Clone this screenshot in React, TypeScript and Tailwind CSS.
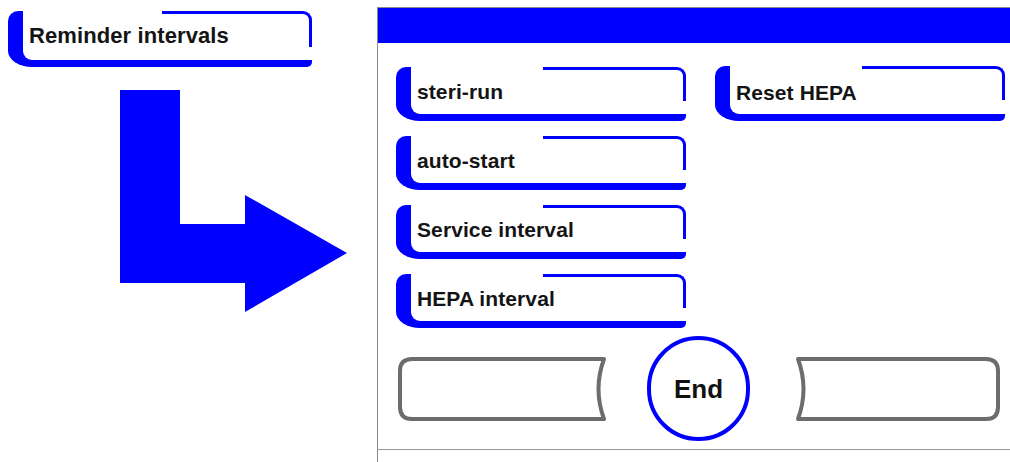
import React from 'react';

const BLUE = 'border-[#0000ff]';

type MenuButtonProps = {
  label: string;
  width: string;
  height: string;
  cornerW: string;
  cornerH: string;
  textSize?: string;
  nudge?: string;
};

// blue "tab" button: thick left bar, bottom bar, thin top-right hook
const MenuButton = ({ label, width, height, cornerW, cornerH, textSize = 'text-[21px]', nudge = '' }: MenuButtonProps) => (
  <div
    className={`relative flex items-center ${width} ${height} rounded-tl-[10px] rounded-bl-[24px_16px] rounded-br-[5px] border-l-[15px] border-b-[7px] ${BLUE} pl-[6px]`}
  >
    <span className={`${textSize} ${nudge} font-bold leading-none text-[#141414] tracking-[0.1px]`}>{label}</span>
    <span
      className={`absolute right-0 top-0 ${cornerW} ${cornerH} rounded-tr-[9px] border-t-[3px] border-r-[3px] ${BLUE}`}
    />
  </div>
);

const SoftKeyLeft = () => (
  <svg width="209" height="64" viewBox="0 0 209 64" className="shrink-0">
    <path
      d="M14 2 H206 Q195 32 206 62 H14 Q2 62 2 50 V14 Q2 2 14 2 Z"
      fill="white"
      stroke="#6c6c6c"
      strokeWidth="4"
      strokeLinejoin="round"
    />
  </svg>
);

const SoftKeyRight = () => (
  <svg width="205" height="64" viewBox="0 0 205 64" className="shrink-0">
    <path
      d="M3 2 Q14 32 3 62 H191 Q203 62 203 50 V14 Q203 2 191 2 Z"
      fill="white"
      stroke="#6c6c6c"
      strokeWidth="4"
      strokeLinejoin="round"
    />
  </svg>
);

const App = () => {
  const left = ['steri-run', 'auto-start', 'Service interval', 'HEPA interval'];

  return (
    <div className="flex w-[1010px] h-[462px] overflow-hidden bg-white font-['Liberation_Sans',Arial,sans-serif]">
      {/* left side: menu entry + arrow */}
      <div className="flex w-[377px] shrink-0 flex-col">
        <div className="ml-[8px] mt-[11px]">
          <MenuButton
            label="Reminder intervals"
            width="w-[304px]"
            height="h-[56px]"
            cornerW="w-[150px]"
            cornerH="h-[36px]"
            textSize="text-[22px]"
          />
        </div>
        <svg width="227" height="222" viewBox="0 0 227 222" className="ml-[120px] mt-[23px]">
          <path d="M0 0 H60 V134 H125 V105 L227 163 L125 222 V193 H0 Z" fill="#0000ff" />
        </svg>
      </div>

      {/* right side: display panel */}
      <div className="mt-[7px] flex flex-1 flex-col border-l border-t border-[#8c8c8c]">
        <div className="h-[35px] bg-[#0000ff]" />

        <div className="pl-[18px] pt-[24px]">
          <div className="grid grid-cols-[290px_290px] gap-x-[29px]">
            <div className="flex flex-col gap-[15px]">
              {left.map((item) => (
                <MenuButton
                  key={item}
                  label={item}
                  width="w-[290px]"
                  height="h-[54px]"
                  cornerW="w-[143px]"
                  cornerH="h-[34px]"
                  nudge="mt-[2px]"
                />
              ))}
            </div>
            <div className="-mt-[1px]">
              <MenuButton
                label="Reset HEPA"
                width="w-[290px]"
                height="h-[55px]"
                cornerW="w-[143px]"
                cornerH="h-[34px]"
                nudge="mt-[4px]"
              />
            </div>
          </div>

          <div className="mt-[8px] flex h-[105px] items-center pl-[2px]">
            <SoftKeyLeft />
            <div className="ml-[40px] flex h-[105px] w-[103px] shrink-0 items-center justify-center rounded-full border-[4px] border-[#0000ff]">
              <span className="text-[26px] font-bold leading-none text-[#111]">End</span>
            </div>
            <div className="ml-[45px]">
              <SoftKeyRight />
            </div>
          </div>
        </div>

        <div className="mt-[8px] flex-1 border-t border-[#9a9a9a]" />
      </div>
    </div>
  );
};

export default App;
